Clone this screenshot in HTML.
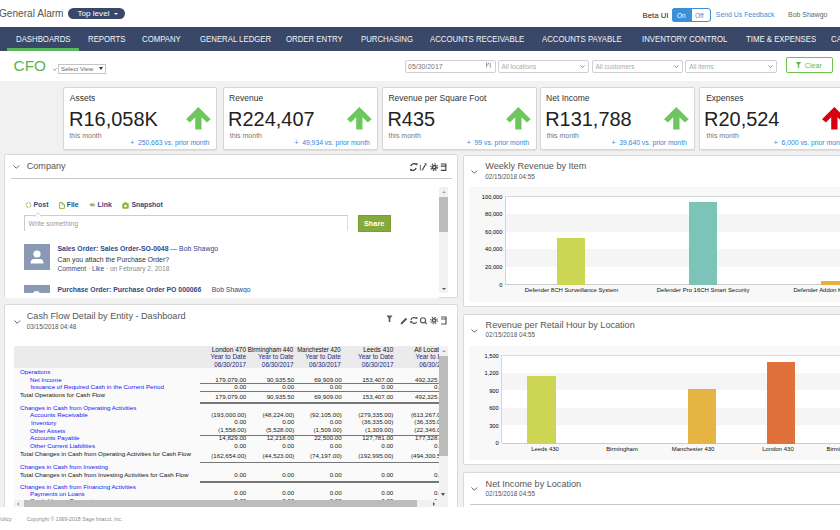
<!DOCTYPE html>
<html><head><meta charset="utf-8">
<style>
*{box-sizing:border-box;margin:0;padding:0}
html,body{width:840px;height:530px;overflow:hidden;background:#fff}
body{position:relative;font-family:"Liberation Sans",sans-serif;color:#333}
.a{position:absolute;white-space:nowrap;line-height:1}
.nav{position:absolute;left:0;top:27px;width:840px;height:24px;background:#394869}
.ni{position:absolute;top:7.5px;font-size:8.7px;color:#f4f5f7;line-height:1;white-space:nowrap;transform:scaleX(0.897);transform-origin:0 0}
.gray{position:absolute;left:0;top:81px;width:840px;height:426px;background:#f1f1f1}
.card{position:absolute;top:87px;width:154.5px;height:62.8px;background:#fff;border:1px solid #d6d6d6;border-radius:2px;box-shadow:0 1px 1px rgba(0,0,0,.08)}
.kt{position:absolute;left:6px;top:5.8px;font-size:8.5px;color:#333;line-height:1;white-space:nowrap}
.kv{position:absolute;left:4.8px;top:22.1px;font-size:19.95px;color:#222;line-height:1;white-space:nowrap}
.km{position:absolute;left:5.2px;top:43.9px;font-size:7px;color:#777;line-height:1;white-space:nowrap}
.kd{position:absolute;right:6.8px;top:51.7px;font-size:6.8px;color:#3088d8;line-height:1;white-space:nowrap}
.arr{position:absolute;left:122.8px;top:18.9px}
.panel{position:absolute;background:#fff;border:1px solid #dadada;border-radius:2px}
.pt{position:absolute;font-size:9.1px;color:#555;line-height:1;white-space:nowrap}
.pd{position:absolute;font-size:6.35px;color:#555;line-height:1;white-space:nowrap}
.chev{position:absolute}
.inp{position:absolute;top:59.5px;height:13px;border:1px solid #cfcfcf;border-radius:2px;background:#fff;font-size:6.5px;color:#aaa;line-height:11px;padding-left:3px;white-space:nowrap}
</style></head><body>

<!-- header -->
<div class="a" style="left:-1px;top:9.2px;font-size:10.1px;color:#555">General Alarm</div>
<div class="a" style="left:68px;top:8px;width:57px;height:11px;border-radius:6px;background:#394869"></div>
<div class="a" style="left:77.5px;top:10.4px;font-size:8.1px;color:#fff">Top level</div>
<div class="a" style="left:114px;top:12.5px;width:0;height:0;border-left:2.5px solid transparent;border-right:2.5px solid transparent;border-top:2.5px solid #fff"></div>

<div class="a" style="left:642.5px;top:12.2px;font-size:7.8px;color:#222">Beta UI</div>
<div class="a" style="left:672px;top:8.3px;width:39px;height:13.4px;border:1px solid #3d8fd8;border-radius:3px;background:#fff"></div>
<div class="a" style="left:672px;top:8.3px;width:19.5px;height:13.4px;border-radius:3px 0 0 3px;background:#3d8fd8"></div>
<div class="a" style="left:677px;top:13px;font-size:6.5px;color:#fff">On</div>
<div class="a" style="left:695px;top:13px;font-size:6.5px;color:#3d8fd8">Off</div>
<div class="a" style="left:715.8px;top:12.3px;font-size:6.9px;color:#3d8fd8">Send Us Feedback</div>
<div class="a" style="left:788px;top:12.3px;font-size:6.96px;color:#666">Bob Shawgo</div>

<!-- nav -->
<div class="nav">
<div class="ni" style="left:15.5px">DASHBOARDS</div>
<div class="ni" style="left:88px">REPORTS</div>
<div class="ni" style="left:142px">COMPANY</div>
<div class="ni" style="left:199.5px">GENERAL LEDGER</div>
<div class="ni" style="left:286.4px">ORDER ENTRY</div>
<div class="ni" style="left:360.7px">PURCHASING</div>
<div class="ni" style="left:429.8px">ACCOUNTS RECEIVABLE</div>
<div class="ni" style="left:541.9px">ACCOUNTS PAYABLE</div>
<div class="ni" style="left:641.7px">INVENTORY CONTROL</div>
<div class="ni" style="left:745.7px">TIME &amp; EXPENSES</div>
<div class="ni" style="left:830.5px">CASH MANAGEMENT</div>
<div style="position:absolute;left:7px;top:21px;width:72px;height:3px;background:#5cb85c"></div>
</div>

<!-- CFO row -->
<div class="a" style="left:13.6px;top:58.1px;font-size:15.3px;color:#5cb34a">CFO</div>
<svg class="a" style="left:52.8px;top:67.6px" width="4" height="3" viewBox="0 0 4 3"><polyline points="0.3,1.2 1.5,2.5 3.7,0.3" fill="none" stroke="#777" stroke-width="0.8"/></svg>
<div class="a" style="left:58px;top:64px;width:48px;height:9.8px;border:1px solid #c4c4c4;background:#fff"></div>
<div class="a" style="left:61px;top:65.7px;font-size:6.2px;color:#666">Select View</div>
<div class="a" style="left:98.5px;top:67.3px;width:0;height:0;border-left:2.3px solid transparent;border-right:2.3px solid transparent;border-top:3px solid #333"></div>

<div class="inp" style="left:404.5px;width:91px;color:#777;font-size:6.9px;padding-left:2.6px">05/30/2017</div>
<svg class="a" style="left:486.3px;top:61.8px" width="5" height="6" viewBox="0 0 5 6"><path d="M0.5 0.3 V5.5 M2.3 0.3 V2.3 M4.3 0.8 V5.7 M0.5 3 H2.3" stroke="#888" stroke-width="0.8"/></svg>
<div class="inp" style="left:497.5px;width:91px">All locations</div>
<div class="inp" style="left:591.5px;width:91px">All customers</div>
<div class="inp" style="left:685.2px;width:91.4px">All items</div>
<svg class="a" style="left:580px;top:64.8px" width="5" height="3" viewBox="0 0 5 3"><polyline points="0.4,0.4 2.5,2.5 4.6,0.4" fill="none" stroke="#777" stroke-width="0.8"/></svg>
<svg class="a" style="left:674px;top:64.8px" width="5" height="3" viewBox="0 0 5 3"><polyline points="0.4,0.4 2.5,2.5 4.6,0.4" fill="none" stroke="#777" stroke-width="0.8"/></svg>
<svg class="a" style="left:768px;top:64.8px" width="5" height="3" viewBox="0 0 5 3"><polyline points="0.4,0.4 2.5,2.5 4.6,0.4" fill="none" stroke="#777" stroke-width="0.8"/></svg>
<div class="a" style="left:785.8px;top:56.5px;width:47px;height:16.3px;border:1px solid #6cc24a;border-radius:2px;background:#fff"></div>
<svg class="a" style="left:795.8px;top:62.3px" width="5" height="6" viewBox="0 0 5 6"><polygon points="0,0 5,0 5,0.6 3.2,2.4 3.2,5.7 1.8,5.7 1.8,2.4 0,0.6" fill="#5fb84f"/></svg>
<div class="a" style="left:804.8px;top:61.5px;font-size:7.2px;color:#66bb55">Clear</div>

<!-- gray bg -->
<div class="gray"></div>


<!-- kpi -->
<div class="card" style="left:62.6px"><div class="kt" style="left:6.2px">Assets</div><div class="kv" style="left:5.5px">R16,058K</div><div class="km" style="left:5.8px">this month</div><div class="kd">+ &nbsp;250,663 vs. prior month</div><svg class="arr" width="25" height="23" viewBox="0 0 25 23"><polygon points="12.35,0 24.7,12.2 20.8,15.6 15.5,10.3 15.5,22.6 9.2,22.6 9.2,10.3 3.9,15.6 0,12.2" fill="#6cc75c"/></svg></div>
<div class="card" style="left:223.1px"><div class="kt" style="left:5.0px">Revenue</div><div class="kv" style="left:4.0px">R224,407</div><div class="km" style="left:5.6px">this month</div><div class="kd">+ &nbsp;49,934 vs. prior month</div><svg class="arr" width="25" height="23" viewBox="0 0 25 23"><polygon points="12.35,0 24.7,12.2 20.8,15.6 15.5,10.3 15.5,22.6 9.2,22.6 9.2,10.3 3.9,15.6 0,12.2" fill="#6cc75c"/></svg></div>
<div class="card" style="left:382.3px"><div class="kt" style="left:5.2px">Revenue per Square Foot</div><div class="kv" style="left:4.1px">R435</div><div class="km" style="left:5.2px">this month</div><div class="kd">+ &nbsp;99 vs. prior month</div><svg class="arr" width="25" height="23" viewBox="0 0 25 23"><polygon points="12.35,0 24.7,12.2 20.8,15.6 15.5,10.3 15.5,22.6 9.2,22.6 9.2,10.3 3.9,15.6 0,12.2" fill="#6cc75c"/></svg></div>
<div class="card" style="left:540.1px"><div class="kt" style="left:5.0px">Net Income</div><div class="kv" style="left:4.1px">R131,788</div><div class="km" style="left:5.6px">this month</div><div class="kd">+ &nbsp;39,640 vs. prior month</div><svg class="arr" width="25" height="23" viewBox="0 0 25 23"><polygon points="12.35,0 24.7,12.2 20.8,15.6 15.5,10.3 15.5,22.6 9.2,22.6 9.2,10.3 3.9,15.6 0,12.2" fill="#6cc75c"/></svg></div>
<div class="card" style="left:698.7px"><div class="kt" style="left:6.5px">Expenses</div><div class="kv" style="left:4.4px">R20,524</div><div class="km" style="left:6.8px">this month</div><div class="kd">+ &nbsp;6,000 vs. prior month</div><svg class="arr" width="25" height="23" viewBox="0 0 25 23"><polygon points="12.35,0 24.7,12.2 20.8,15.6 15.5,10.3 15.5,22.6 9.2,22.6 9.2,10.3 3.9,15.6 0,12.2" fill="#d9000d"/></svg></div>
<!-- company panel -->
<div class="panel" style="left:4.3px;top:154.2px;width:454px;height:144px;overflow:hidden"></div>
<svg class="chev" style="left:13px;top:164.5px" width="7" height="4" viewBox="0 0 7 4"><polyline points="0.5,0.5 3.3,3.3 6.1,0.5" fill="none" stroke="#555" stroke-width="0.9"/></svg>
<div class="pt" style="left:26.7px;top:162.1px">Company</div>

<svg class="a" style="left:409.5px;top:162.8px" width="38" height="8" viewBox="0 0 38 8">
 <path d="M6.2 1.6 A3.1 3.1 0 0 0 0.9 3.2" fill="none" stroke="#444" stroke-width="1.3"/><polygon points="5,0 7.6,0.2 7.2,3" fill="#444"/>
 <path d="M0.8 6.4 A3.1 3.1 0 0 0 6.1 4.8" fill="none" stroke="#444" stroke-width="1.3"/><polygon points="2,8 -0.6,7.8 -0.2,5" fill="#444"/>
 <rect x="9.8" y="2" width="1.1" height="5.5" fill="#777"/><path d="M12.2 7.2 L15.2 2" stroke="#444" stroke-width="1.2"/><polygon points="14.2,0.6 16.6,0.2 16.2,2.8" fill="#444"/>
 <circle cx="24.2" cy="4.2" r="2.5" fill="#444"/><circle cx="24.2" cy="4.2" r="3.4" fill="none" stroke="#444" stroke-width="1.2" stroke-dasharray="1.3 1.35"/><circle cx="24.2" cy="4.2" r="0.9" fill="#fff"/>
 <path d="M30.8 1 H35.8 V7.4 H30.8 M30.8 3.2 H35.8" fill="none" stroke="#444" stroke-width="1.2"/>
</svg>
<div class="a" style="left:11px;top:178px;width:441px;height:1px;background:#c9c9c9"></div>
<svg class="a" style="left:24.8px;top:202.3px" width="7" height="6" viewBox="0 0 7 6"><circle cx="3.5" cy="3" r="2.4" fill="none" stroke="#8ab33c" stroke-width="1" stroke-dasharray="2.5 1"/></svg>
<div class="a" style="left:33.5px;top:201.6px;font-size:6.9px;color:#2d4a86;font-weight:bold">Post</div>
<svg class="a" style="left:58.8px;top:201.8px" width="6" height="7" viewBox="0 0 6 7"><path d="M0.6 0.6 H3.4 L5.4 2.6 V6.4 H0.6 Z" fill="none" stroke="#8ab33c" stroke-width="1"/><path d="M3.2 0.6 V2.8 H5.4" fill="none" stroke="#8ab33c" stroke-width="0.8"/></svg>
<div class="a" style="left:66.7px;top:201.6px;font-size:6.9px;color:#2d4a86;font-weight:bold">File</div>
<svg class="a" style="left:89px;top:202px" width="7" height="6" viewBox="0 0 7 6"><path d="M0.8 2 L3 4.2 M3.6 1.2 L6 3.6 M2 1.6 L4.8 4.4" stroke="#8ab33c" stroke-width="1.1"/></svg>
<div class="a" style="left:97.6px;top:201.6px;font-size:6.9px;color:#2d4a86;font-weight:bold">Link</div>
<svg class="a" style="left:121.8px;top:201.5px" width="7" height="7" viewBox="0 0 7 7"><rect x="0.3" y="1.3" width="6.4" height="5.4" rx="0.8" fill="#8ab33c"/><rect x="2" y="0.3" width="3" height="1.5" fill="#8ab33c"/><circle cx="3.5" cy="4" r="1.3" fill="#fff"/></svg>
<div class="a" style="left:131.4px;top:201.6px;font-size:6.9px;color:#2d4a86;font-weight:bold">Snapshot</div>
<div class="a" style="left:23.8px;top:215.2px;width:324px;height:16px;border-left:1px solid #ccc;border-top:1px solid #ccc;border-right:1px solid #ddd"></div>
<svg class="a" style="left:34px;top:211.5px" width="8" height="5" viewBox="0 0 8 5"><polygon points="0,4.7 4,0.7 8,4.7" fill="#fff" stroke="#ccc" stroke-width="0.9"/><rect x="0.5" y="4.2" width="7" height="1" fill="#fff"/></svg>
<div class="a" style="left:28.5px;top:221.3px;font-size:6.9px;color:#999">Write something</div>
<div class="a" style="left:357.8px;top:215px;width:33.2px;height:16.5px;background:#86a93b;border:1px solid #7a9c30"></div>
<div class="a" style="left:364px;top:220px;font-size:7.3px;color:#fff;font-weight:bold">Share</div>
<div class="a" style="left:439.4px;top:186.8px;width:9px;height:106px;background:#f1f1f1"></div>
<div class="a" style="left:439.3px;top:197.4px;width:8.6px;height:34.6px;background:#bcbcbc"></div>
<div class="a" style="left:441.9px;top:190.5px;width:0;height:0;border-left:2px solid transparent;border-right:2px solid transparent;border-bottom:2.5px solid #a3a3a3"></div>
<div class="a" style="left:441.9px;top:287.5px;width:0;height:0;border-left:2px solid transparent;border-right:2px solid transparent;border-top:2.5px solid #505050"></div>
<div class="a" style="left:23.8px;top:243.8px;width:26.2px;height:26.2px;background:#8b9ab4"></div>
<svg class="a" style="left:23.8px;top:243.8px" width="26" height="26" viewBox="0 0 26 26"><circle cx="13" cy="10" r="3.6" fill="#fff"/><path d="M6.5 19.5 Q6.5 15 10 15 H16 Q19.5 15 19.5 19.5 Z" fill="#fff"/></svg>
<div class="a" style="left:57.5px;top:246px;font-size:6.86px;color:#2d4a86"><b>Sales Order: Sales Order-SO-0048</b> — Bob Shawgo</div>
<div class="a" style="left:57.5px;top:256.7px;font-size:6.85px;color:#333">Can you attach the Purchase Order?</div>
<div class="a" style="left:57.5px;top:266.4px;font-size:6.6px;color:#888"><span style="color:#2d4a86">Comment</span> · <span style="color:#2d4a86">Like</span> · on February 2, 2018</div>
<div class="a" style="left:23.8px;top:285px;width:26.2px;height:8px;background:#8b9ab4;overflow:hidden"><div style="position:absolute;left:9.4px;top:6.2px;width:7.2px;height:7.2px;border-radius:50%;background:#fff"></div></div>
<div class="a" style="left:57.5px;top:286.6px;font-size:6.86px;color:#2d4a86"><b>Purchase Order: Purchase Order PO 000066</b><span style="margin-left:10.5px">Bob Shawgo</span></div>
<div class="a" style="left:5px;top:293px;width:434px;height:4.5px;background:#fff"></div>

<!-- cash flow panel -->
<div class="panel" style="left:4.3px;top:304.3px;width:454px;height:220px"></div>
<svg class="chev" style="left:14px;top:319.5px" width="7" height="4" viewBox="0 0 7 4"><polyline points="0.5,0.5 3.3,3.3 6.1,0.5" fill="none" stroke="#555" stroke-width="0.9"/></svg>
<div class="pt" style="left:26.8px;top:311.8px">Cash Flow Detail by Entity - Dashboard</div>
<div class="pd" style="left:26.8px;top:323.7px">03/15/2018 04:48</div>

<svg class="a" style="left:385.5px;top:314.5px" width="62" height="10" viewBox="0 0 62 10">
 <polygon points="0.5,0.5 6.5,0.5 4.3,3.2 4.3,7 2.7,7 2.7,3.2" fill="#555"/>
 <path d="M15.5 8.5 L20.5 3.5" stroke="#555" stroke-width="2"/><polygon points="14.6,9.4 15,7.6 16.4,9" fill="#555"/>
 <path d="M30.5 4 A3 3 0 0 0 25 5 M25.2 6 A3 3 0 0 0 30.7 7" fill="none" stroke="#555" stroke-width="1.3"/><polygon points="29.5,2.3 31.5,2 31.3,4.3" fill="#555"/><polygon points="24,6 26.5,6 24.5,8.5" fill="#555"/>
 <circle cx="37" cy="5.3" r="2.6" fill="none" stroke="#555" stroke-width="1.1"/><path d="M38.8 7.2 L40.8 9.2" stroke="#555" stroke-width="1.2"/>
 <circle cx="48" cy="5.5" r="2.4" fill="#555"/><circle cx="48" cy="5.5" r="3.3" fill="none" stroke="#555" stroke-width="1.1" stroke-dasharray="1.3 1.3"/><circle cx="48" cy="5.5" r="0.9" fill="#fff"/>
 <path d="M55 2 H60 V9 H55 M55 4 H60" fill="none" stroke="#555" stroke-width="1.2"/>
</svg>
<div class="a" style="left:14px;top:346.2px;width:425px;height:154px;background:#fafafa"></div>
<div class="a" style="left:14px;top:346.2px;width:425px;height:21.7px;background:#ebebeb"></div>
<div class="a" style="left:14px;top:346px;width:425px;height:154px;overflow:hidden">
<div style="position:absolute;left:-14px;top:-346px;width:840px;height:530px">
<div class="a" style="left:20px;top:368.75px;font-size:6.2px;color:#1515f0">Operations</div>
<div class="a" style="left:30px;top:376.75px;font-size:6.2px;color:#1515f0">Net Income</div>
<div class="a" style="right:593.7px;top:376.55px;font-size:6.2px;color:#222">179,079.00</div>
<div class="a" style="right:545.8px;top:376.55px;font-size:6.2px;color:#222">90,935.50</div>
<div class="a" style="right:498.3px;top:376.55px;font-size:6.2px;color:#222">69,909.00</div>
<div class="a" style="right:446.7px;top:376.55px;font-size:6.2px;color:#222">153,407.00</div>
<div class="a" style="right:394.0px;top:376.55px;font-size:6.2px;color:#222">492,325.50</div>
<div class="a" style="left:30.4px;top:384.05px;font-size:6.2px;color:#1515f0">Issuance of Required Cash in the Current Period</div>
<div class="a" style="right:593.7px;top:383.55px;font-size:6.2px;color:#222">0.00</div>
<div class="a" style="right:545.8px;top:383.55px;font-size:6.2px;color:#222">0.00</div>
<div class="a" style="right:498.3px;top:383.55px;font-size:6.2px;color:#222">0.00</div>
<div class="a" style="right:446.7px;top:383.55px;font-size:6.2px;color:#222">0.00</div>
<div class="a" style="right:394.0px;top:383.55px;font-size:6.2px;color:#222">0.00</div>
<div class="a" style="left:20px;top:391.75px;font-size:6.2px;color:#111">Total Operations for Cash Flow</div>
<div class="a" style="right:593.7px;top:393.55px;font-size:6.2px;color:#222">179,079.00</div>
<div class="a" style="right:545.8px;top:393.55px;font-size:6.2px;color:#222">90,935.50</div>
<div class="a" style="right:498.3px;top:393.55px;font-size:6.2px;color:#222">69,909.00</div>
<div class="a" style="right:446.7px;top:393.55px;font-size:6.2px;color:#222">153,407.00</div>
<div class="a" style="right:394.0px;top:393.55px;font-size:6.2px;color:#222">492,325.50</div>
<div class="a" style="left:20px;top:405.35px;font-size:6.2px;color:#1515f0">Changes in Cash from Operating Activities</div>
<div class="a" style="left:30px;top:412.05px;font-size:6.2px;color:#1515f0">Accounts Receivable</div>
<div class="a" style="right:593.7px;top:411.75px;font-size:6.2px;color:#222">(193,000.00)</div>
<div class="a" style="right:545.8px;top:411.75px;font-size:6.2px;color:#222">(48,224.00)</div>
<div class="a" style="right:498.3px;top:411.75px;font-size:6.2px;color:#222">(92,105.00)</div>
<div class="a" style="right:446.7px;top:411.75px;font-size:6.2px;color:#222">(279,335.00)</div>
<div class="a" style="right:394.0px;top:411.75px;font-size:6.2px;color:#222">(613,267.00)</div>
<div class="a" style="left:31px;top:420.25px;font-size:6.2px;color:#1515f0">Inventory</div>
<div class="a" style="right:593.7px;top:419.45px;font-size:6.2px;color:#222">0.00</div>
<div class="a" style="right:545.8px;top:419.45px;font-size:6.2px;color:#222">0.00</div>
<div class="a" style="right:498.3px;top:419.45px;font-size:6.2px;color:#222">0.00</div>
<div class="a" style="right:446.7px;top:419.45px;font-size:6.2px;color:#222">(36,335.00)</div>
<div class="a" style="right:394.0px;top:419.45px;font-size:6.2px;color:#222">(36,335.00)</div>
<div class="a" style="left:30px;top:427.75px;font-size:6.2px;color:#1515f0">Other Assets</div>
<div class="a" style="right:593.7px;top:427.25px;font-size:6.2px;color:#222">(1,558.00)</div>
<div class="a" style="right:545.8px;top:427.25px;font-size:6.2px;color:#222">(5,528.00)</div>
<div class="a" style="right:498.3px;top:427.25px;font-size:6.2px;color:#222">(1,509.00)</div>
<div class="a" style="right:446.7px;top:427.25px;font-size:6.2px;color:#222">(1,309.00)</div>
<div class="a" style="right:394.0px;top:427.25px;font-size:6.2px;color:#222">(22,346.00)</div>
<div class="a" style="left:30px;top:435.05px;font-size:6.2px;color:#1515f0">Accounts Payable</div>
<div class="a" style="right:593.7px;top:435.05px;font-size:6.2px;color:#222">14,829.00</div>
<div class="a" style="right:545.8px;top:435.05px;font-size:6.2px;color:#222">12,218.00</div>
<div class="a" style="right:498.3px;top:435.05px;font-size:6.2px;color:#222">22,500.00</div>
<div class="a" style="right:446.7px;top:435.05px;font-size:6.2px;color:#222">127,781.00</div>
<div class="a" style="right:394.0px;top:435.05px;font-size:6.2px;color:#222">177,328.00</div>
<div class="a" style="left:30px;top:443.05px;font-size:6.2px;color:#1515f0">Other Current Liabilities</div>
<div class="a" style="right:593.7px;top:442.75px;font-size:6.2px;color:#222">0.00</div>
<div class="a" style="right:545.8px;top:442.75px;font-size:6.2px;color:#222">0.00</div>
<div class="a" style="right:498.3px;top:442.75px;font-size:6.2px;color:#222">0.00</div>
<div class="a" style="right:446.7px;top:442.75px;font-size:6.2px;color:#222">0.00</div>
<div class="a" style="right:394.0px;top:442.75px;font-size:6.2px;color:#222">0.00</div>
<div class="a" style="left:20px;top:450.55px;font-size:6.2px;color:#111">Total Changes in Cash from Operating Activities for Cash Flow</div>
<div class="a" style="right:593.7px;top:452.75px;font-size:6.2px;color:#222">(162,654.00)</div>
<div class="a" style="right:545.8px;top:452.75px;font-size:6.2px;color:#222">(44,523.00)</div>
<div class="a" style="right:498.3px;top:452.75px;font-size:6.2px;color:#222">(74,197.00)</div>
<div class="a" style="right:446.7px;top:452.75px;font-size:6.2px;color:#222">(192,995.00)</div>
<div class="a" style="right:394.0px;top:452.75px;font-size:6.2px;color:#222">(494,300.50)</div>
<div class="a" style="left:20px;top:464.05px;font-size:6.2px;color:#1515f0">Changes in Cash from Investing</div>
<div class="a" style="left:20px;top:471.65px;font-size:6.2px;color:#111">Total Changes in Cash from Investing Activities for Cash Flow</div>
<div class="a" style="right:593.7px;top:472.15px;font-size:6.2px;color:#222">0.00</div>
<div class="a" style="right:545.8px;top:472.15px;font-size:6.2px;color:#222">0.00</div>
<div class="a" style="right:498.3px;top:472.15px;font-size:6.2px;color:#222">0.00</div>
<div class="a" style="right:446.7px;top:472.15px;font-size:6.2px;color:#222">0.00</div>
<div class="a" style="right:394.0px;top:472.15px;font-size:6.2px;color:#222">0.00</div>
<div class="a" style="left:20px;top:484.05px;font-size:6.2px;color:#1515f0">Changes in Cash from Financing Activities</div>
<div class="a" style="left:30px;top:490.75px;font-size:6.2px;color:#1515f0">Payments on Loans</div>
<div class="a" style="right:593.7px;top:490.15px;font-size:6.2px;color:#222">0.00</div>
<div class="a" style="right:545.8px;top:490.15px;font-size:6.2px;color:#222">0.00</div>
<div class="a" style="right:498.3px;top:490.15px;font-size:6.2px;color:#222">0.00</div>
<div class="a" style="right:446.7px;top:490.15px;font-size:6.2px;color:#222">0.00</div>
<div class="a" style="right:394.0px;top:490.15px;font-size:6.2px;color:#222">0.00</div>
<div class="a" style="left:30px;top:497.75px;font-size:6.2px;color:#1515f0">Capital Lease Payments</div>
<div class="a" style="right:593.7px;top:497.75px;font-size:6.2px;color:#222">0.00</div>
<div class="a" style="right:545.8px;top:497.75px;font-size:6.2px;color:#222">0.00</div>
<div class="a" style="right:498.3px;top:497.75px;font-size:6.2px;color:#222">0.00</div>
<div class="a" style="right:446.7px;top:497.75px;font-size:6.2px;color:#222">0.00</div>
<div class="a" style="right:394.0px;top:497.75px;font-size:6.2px;color:#222">0.00</div>
<div class="a" style="left:200px;top:383.3px;width:239px;height:1px;background:#777"></div>
<div class="a" style="left:200px;top:391px;width:239px;height:1px;background:#777"></div>
<div class="a" style="left:200px;top:402px;width:239px;height:2px;background:#777"></div>
<div class="a" style="left:200px;top:434.5px;width:239px;height:1px;background:#777"></div>
<div class="a" style="left:200px;top:462px;width:239px;height:1px;background:#777"></div>
<div class="a" style="left:200px;top:481.2px;width:239px;height:2px;background:#777"></div>
<div class="a" style="right:594.0px;top:346.90px;font-size:6.5px;color:#111">London 470</div>
<div class="a" style="right:594.0px;top:353.84px;font-size:6.45px;color:#1d2a80">Year to Date</div>
<div class="a" style="right:594.0px;top:361.62px;font-size:6.35px;color:#1d2a80">06/30/2017</div>
<div class="a" style="right:546.4px;top:346.90px;font-size:6.5px;color:#111;transform:scaleX(0.964);transform-origin:100% 0">Birmingham 440</div>
<div class="a" style="right:546.4px;top:353.84px;font-size:6.45px;color:#1d2a80">Year to Date</div>
<div class="a" style="right:546.4px;top:361.62px;font-size:6.35px;color:#1d2a80">06/30/2017</div>
<div class="a" style="right:499.2px;top:346.90px;font-size:6.5px;color:#111;transform:scaleX(0.929);transform-origin:100% 0">Manchester 420</div>
<div class="a" style="right:499.2px;top:353.84px;font-size:6.45px;color:#1d2a80">Year to Date</div>
<div class="a" style="right:499.2px;top:361.62px;font-size:6.35px;color:#1d2a80">06/30/2017</div>
<div class="a" style="right:446.5px;top:346.90px;font-size:6.5px;color:#111">Leeds 410</div>
<div class="a" style="right:446.5px;top:353.84px;font-size:6.45px;color:#1d2a80">Year to Date</div>
<div class="a" style="right:446.5px;top:361.62px;font-size:6.35px;color:#1d2a80">06/30/2017</div>
<div class="a" style="right:389.0px;top:346.90px;font-size:6.5px;color:#111">All Locations</div>
<div class="a" style="right:389.0px;top:353.84px;font-size:6.45px;color:#1d2a80">Year to Date</div>
<div class="a" style="right:389.0px;top:361.62px;font-size:6.35px;color:#1d2a80">06/30/2017</div>
</div></div>
<div class="a" style="left:439.2px;top:346px;width:9px;height:154px;background:#f1f1f1"></div>
<div class="a" style="left:439.4px;top:355.5px;width:8.6px;height:100.5px;background:#bcbcbc"></div>
<div class="a" style="left:441.7px;top:349.5px;width:0;height:0;border-left:2px solid transparent;border-right:2px solid transparent;border-bottom:2.5px solid #a3a3a3"></div>
<div class="a" style="left:441.3px;top:492.6px;width:0;height:0;border-left:2.5px solid transparent;border-right:2.5px solid transparent;border-top:3px solid #505050"></div>
<div class="a" style="left:14px;top:499.8px;width:434px;height:7px;background:#f1f1f1"></div>
<div class="a" style="left:23.8px;top:499.8px;width:393px;height:7px;background:#bcbcbc"></div>
<div class="a" style="left:17px;top:501.5px;width:0;height:0;border-top:2px solid transparent;border-bottom:2px solid transparent;border-right:2.5px solid #a3a3a3"></div>
<div class="a" style="left:433px;top:501.5px;width:0;height:0;border-top:2px solid transparent;border-bottom:2px solid transparent;border-left:2.5px solid #505050"></div>

<!-- weekly revenue -->
<div class="panel" style="left:463.4px;top:154.8px;width:400px;height:152px"></div>
<svg class="chev" style="left:471px;top:169.5px" width="7" height="4" viewBox="0 0 7 4"><polyline points="0.5,0.5 3.3,3.3 6.1,0.5" fill="none" stroke="#555" stroke-width="0.9"/></svg>
<div class="pt" style="left:485.3px;top:162.2px">Weekly Revenue by Item</div>
<div class="pd" style="left:485.3px;top:173.7px">02/15/2018 04:55</div>
<div class="a" style="left:469.4px;top:187.2px;width:380px;height:115px;background:#f8f8f8"></div>
<div class="a" style="left:505.4px;top:196.40px;width:334.6px;height:17.88px;background:#ffffff"></div>
<div class="a" style="left:505.4px;top:213.98px;width:334.6px;height:17.88px;background:#f5f5f5"></div>
<div class="a" style="left:505.4px;top:231.56px;width:334.6px;height:17.88px;background:#ffffff"></div>
<div class="a" style="left:505.4px;top:249.14px;width:334.6px;height:17.88px;background:#f5f5f5"></div>
<div class="a" style="left:505.4px;top:266.72px;width:334.6px;height:17.88px;background:#ffffff"></div>
<div class="a" style="left:505.4px;top:196.4px;width:334.6px;height:1px;background:#d8d8d8"></div>
<div class="a" style="left:504.9px;top:196.4px;width:1px;height:87.9px;background:#d5d5d5"></div>
<div class="a" style="left:505.4px;top:284.3px;width:334.6px;height:1px;background:#ccc"></div>
<div class="a" style="right:337.6px;top:194.70px;font-size:5.7px;color:#000">100,000</div>
<div class="a" style="right:337.6px;top:212.28px;font-size:5.7px;color:#000">80,000</div>
<div class="a" style="right:337.6px;top:229.86px;font-size:5.7px;color:#000">60,000</div>
<div class="a" style="right:337.6px;top:247.44px;font-size:5.7px;color:#000">40,000</div>
<div class="a" style="right:337.6px;top:265.02px;font-size:5.7px;color:#000">20,000</div>
<div class="a" style="right:337.6px;top:282.60px;font-size:5.7px;color:#000">0</div>
<div class="a" style="left:557.4px;top:238.4px;width:27.8px;height:46.5px;background:#cdd654"></div>
<div class="a" style="left:689px;top:202px;width:28.0px;height:82.9px;background:#7cc3b8"></div>
<div class="a" style="left:821px;top:280.5px;width:29.0px;height:4.4px;background:#e6b043"></div>
<div class="a" style="left:571.5px;top:288.2px;font-size:5.95px;color:#111;transform:translateX(-50%)">Defender 8CH Surveillance System</div>
<div class="a" style="left:703px;top:288.2px;font-size:5.95px;color:#111;transform:translateX(-50%)">Defender Pro 16CH Smart Security</div>
<div class="a" style="left:793.4px;top:288.2px;font-size:5.95px;color:#111">Defender Addon Kit Wireless</div>

<!-- revenue per retail hour -->
<div class="panel" style="left:463.4px;top:313.5px;width:400px;height:151.8px"></div>
<svg class="chev" style="left:471px;top:329px" width="7" height="4" viewBox="0 0 7 4"><polyline points="0.5,0.5 3.3,3.3 6.1,0.5" fill="none" stroke="#555" stroke-width="0.9"/></svg>
<div class="pt" style="left:485.6px;top:321.0px">Revenue per Retail Hour by Location</div>
<div class="pd" style="left:485.6px;top:332.0px">02/15/2018 04:55</div>
<div class="a" style="left:469.4px;top:345.8px;width:380px;height:114px;background:#f8f8f8"></div>
<div class="a" style="left:501.7px;top:355.20px;width:338.3px;height:17.86px;background:#ffffff"></div>
<div class="a" style="left:501.7px;top:372.76px;width:338.3px;height:17.86px;background:#f5f5f5"></div>
<div class="a" style="left:501.7px;top:390.32px;width:338.3px;height:17.86px;background:#ffffff"></div>
<div class="a" style="left:501.7px;top:407.88px;width:338.3px;height:17.86px;background:#f5f5f5"></div>
<div class="a" style="left:501.7px;top:425.44px;width:338.3px;height:17.86px;background:#ffffff"></div>
<div class="a" style="left:501.7px;top:355.2px;width:338.3px;height:1px;background:#d8d8d8"></div>
<div class="a" style="left:501.2px;top:355.2px;width:1px;height:87.80000000000001px;background:#d5d5d5"></div>
<div class="a" style="left:501.7px;top:443px;width:338.3px;height:1px;background:#ccc"></div>
<div class="a" style="right:341.3px;top:353.50px;font-size:5.7px;color:#000">1,500</div>
<div class="a" style="right:341.3px;top:371.06px;font-size:5.7px;color:#000">1,200</div>
<div class="a" style="right:341.3px;top:388.62px;font-size:5.7px;color:#000">900</div>
<div class="a" style="right:341.3px;top:406.18px;font-size:5.7px;color:#000">600</div>
<div class="a" style="right:341.3px;top:423.74px;font-size:5.7px;color:#000">300</div>
<div class="a" style="right:341.3px;top:441.30px;font-size:5.7px;color:#000">0</div>
<div class="a" style="left:526.7px;top:376.3px;width:29.5px;height:67.3px;background:#cdd654"></div>
<div class="a" style="left:687.6px;top:389px;width:28.4px;height:54.6px;background:#e6b443"></div>
<div class="a" style="left:767.3px;top:362px;width:27.7px;height:81.6px;background:#e0713b"></div>
<div class="a" style="left:545px;top:446.9px;font-size:5.95px;color:#111;transform:translateX(-50%)">Leeds 430</div>
<div class="a" style="left:622px;top:446.9px;font-size:5.95px;color:#111;transform:translateX(-50%)">Birmingham</div>
<div class="a" style="left:693px;top:446.9px;font-size:5.95px;color:#111;transform:translateX(-50%)">Manchester 430</div>
<div class="a" style="left:778px;top:446.9px;font-size:5.95px;color:#111;transform:translateX(-50%)">London 430</div>
<div class="a" style="left:826.5px;top:446.9px;font-size:5.95px;color:#111">Birmingham</div>

<!-- net income -->
<div class="panel" style="left:463.4px;top:471.5px;width:400px;height:60px"></div>
<svg class="chev" style="left:471px;top:487px" width="7" height="4" viewBox="0 0 7 4"><polyline points="0.5,0.5 3.3,3.3 6.1,0.5" fill="none" stroke="#555" stroke-width="0.9"/></svg>
<div class="pt" style="left:485.6px;top:480.3px">Net Income by Location</div>
<div class="pd" style="left:485.6px;top:490.9px">02/15/2018 04:55</div>
<div class="a" style="left:470px;top:504.2px;width:370px;height:1px;background:#c8c8c8"></div>

<!-- footer -->
<div class="a" style="left:0;top:507px;width:840px;height:23px;background:#fff"></div>
<div class="a" style="left:-3px;top:517.2px;font-size:5.6px;color:#8a8a8a">Policy</div>
<div class="a" style="left:26.7px;top:517.2px;font-size:5.23px;color:#8a8a8a">Copyright © 1999-2018 Sage Intacct, Inc.</div>

</body></html>
